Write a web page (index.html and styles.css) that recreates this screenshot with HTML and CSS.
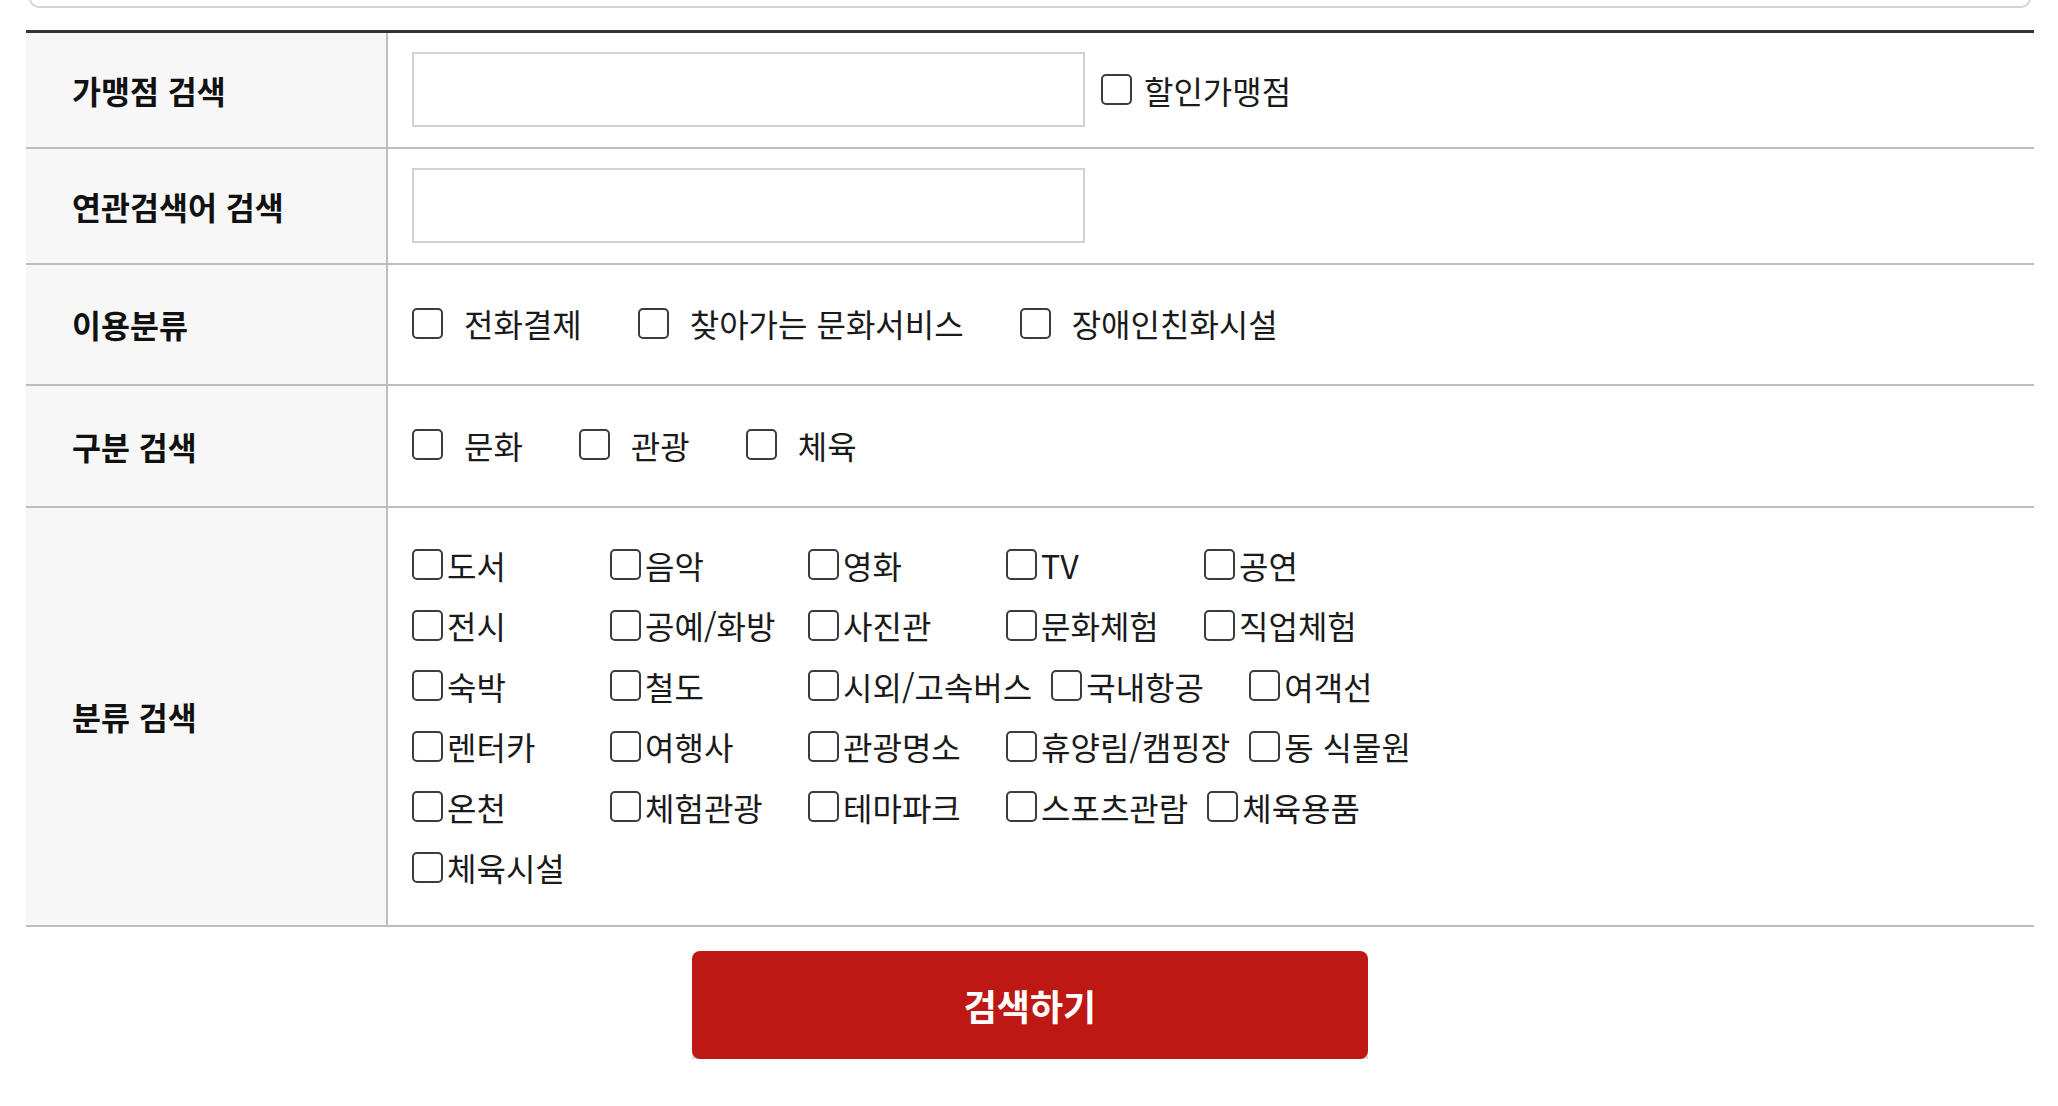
FILE: index.html
```html
<!DOCTYPE html>
<html lang="ko">
<head>
  <meta charset="UTF-8">
  <meta name="viewport" content="width=device-width, initial-scale=1.0">
  <title>가맹점 검색</title>
  <link rel="stylesheet" href="styles.css">
</head>
<body>
  <div class="wrap">
    <div class="top-box"></div>

    <table class="search-table">
      <tr class="row-input">
        <th>가맹점 검색</th>
        <td>
          <input type="text" class="text-input">
          <label class="sale-check"><input type="checkbox"> 할인가맹점</label>
        </td>
      </tr>
      <tr class="row-input">
        <th>연관검색어 검색</th>
        <td><input type="text" class="text-input"></td>
      </tr>
      <tr class="row-use">
        <th>이용분류</th>
        <td>
          <label class="opt"><input type="checkbox"><span>전화결제</span></label>
          <label class="opt"><input type="checkbox"><span>찾아가는 문화서비스</span></label>
          <label class="opt"><input type="checkbox"><span>장애인친화시설</span></label>
        </td>
      </tr>
      <tr class="row-type">
        <th>구분 검색</th>
        <td>
          <label class="opt"><input type="checkbox"><span>문화</span></label>
          <label class="opt"><input type="checkbox"><span>관광</span></label>
          <label class="opt"><input type="checkbox"><span>체육</span></label>
        </td>
      </tr>
      <tr class="row-cate">
        <th>분류 검색</th>
        <td>
          <div class="cate-list" id="cate-list"></div>
        </td>
      </tr>
    </table>

    <div class="btn-area">
      <button type="button" class="btn-search">검색하기</button>
    </div>
  </div>

  <script>
    const categories = [
      '도서', '음악', '영화', 'TV', '공연',
      '전시', '공예/화방', '사진관', '문화체험', '직업체험',
      '숙박', '철도', '시외/고속버스', '국내항공', '여객선',
      '렌터카', '여행사', '관광명소', '휴양림/캠핑장', '동 식물원',
      '온천', '체험관광', '테마파크', '스포츠관람', '체육용품',
      '체육시설'
    ];

    // Build the category checkboxes
    const list = document.getElementById('cate-list');
    categories.forEach(name => {
      const item = document.createElement('label');
      item.className = 'cate-item';
      item.innerHTML = `<input type="checkbox"><span>${name}</span>`;
      list.appendChild(item);
    });
  </script>
</body>
</html>
```

FILE: styles.css
```css
body {
  margin: 0;
  padding: 0;
  background: #fff;
  color: #111;
  font-family: 'Noto Sans CJK KR', 'Noto Sans', sans-serif;
}

.wrap {
  width: 2008px;
  margin-left: 26px;
}

.top-box {
  height: 40px;
  margin: -36px 3px 0;
  border: 2px solid #d4d4d4;
  border-radius: 10px;
}

.search-table {
  width: 100%;
  margin-top: 22px;
  border-collapse: collapse;
  border-top: 3px solid #333;
}

.search-table th {
  width: 314px;
  padding: 0 0 0 46px;
  background: #f7f7f7;
  border-right: 2px solid #bdbdbd;
  border-bottom: 2px solid #bdbdbd;
  text-align: left;
  font-size: 31.5px;
  font-weight: 700;
  color: #111;
}

.search-table td {
  padding: 0 0 0 24px;
  border-bottom: 2px solid #bdbdbd;
  font-size: 32px;
  color: #1a1a1a;
}

.row-input {
  height: 116px;
}

.row-use {
  height: 121px;
}

.row-type {
  height: 122px;
}

.row-cate {
  height: 418px;
}

.row-cate td {
  padding-top: 27px;
  padding-bottom: 27px;
}

input[type="checkbox"] {
  appearance: none;
  -webkit-appearance: none;
  width: 31px;
  height: 31px;
  margin: 0;
  border: 2px solid #3c3c3c;
  border-radius: 5px;
  background: #fff;
  flex-shrink: 0;
}

.text-input {
  width: 673px;
  height: 75px;
  box-sizing: border-box;
  border: 2px solid #d2d2d2;
  vertical-align: middle;
  font-size: 26px;
}

.sale-check {
  display: inline-flex;
  align-items: center;
  gap: 12px;
  margin-left: 7px;
  vertical-align: middle;
}

.opt {
  display: inline-flex;
  align-items: center;
  margin-right: 47px;
}

.opt input {
  margin-right: 21px;
}

.cate-list {
  display: flex;
  flex-wrap: wrap;
  max-width: 1100px;
}

.cate-item {
  display: flex;
  align-items: center;
  min-width: 198px;
  height: 60.5px;
  padding-right: 19px;
  box-sizing: border-box;
}

.cate-item input {
  margin-right: 4px;
}

.btn-area {
  padding-top: 24px;
  text-align: center;
}

.btn-search {
  width: 676px;
  height: 108px;
  border: none;
  border-radius: 8px;
  background: #be1814;
  box-shadow: 0 7px 0 #d6dadd;
  color: #fff;
  font-family: 'Noto Sans CJK KR', sans-serif;
  font-size: 36px;
  font-weight: 700;
  cursor: pointer;
}
```
